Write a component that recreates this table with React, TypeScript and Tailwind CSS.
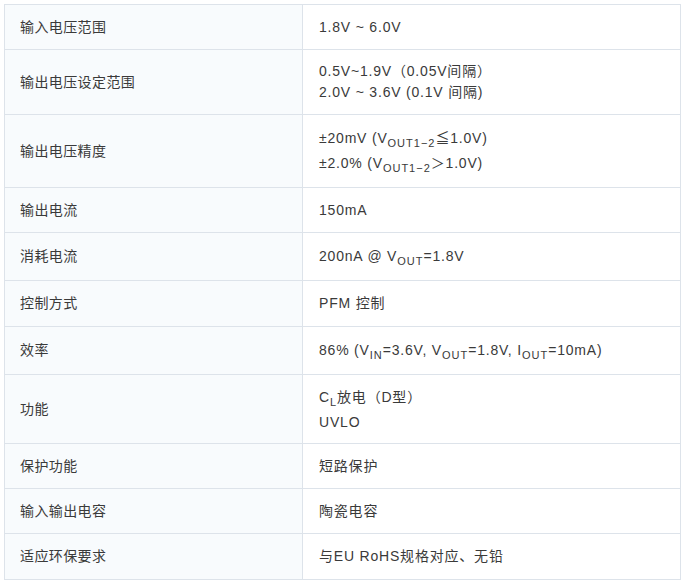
import React from "react";

type Row = {
  label: string;
  h: string;
  lines: React.ReactNode[];
  leading?: string;
};

const Sub = ({ children }: { children: React.ReactNode }) => (
  <span className="relative top-[4px] text-[11px] tracking-[1px]">{children}</span>
);

const ROWS: Row[] = [
  { label: "输入电压范围", h: "h-[45px]", lines: ["1.8V ~ 6.0V"] },
  {
    label: "输出电压设定范围",
    h: "h-[65px]",
    leading: "leading-[21px]",
    lines: ["0.5V~1.9V（0.05V间隔）", "2.0V ~ 3.6V (0.1V 间隔)"],
  },
  {
    label: "输出电压精度",
    h: "h-[73px]",
    leading: "leading-[24px]",
    lines: [
      <>±20mV (V<Sub>OUT1−2</Sub>≦1.0V)</>,
      <>±2.0% (V<Sub>OUT1−2</Sub>＞1.0V)</>,
    ],
  },
  { label: "输出电流", h: "h-[45px]", lines: ["150mA"] },
  {
    label: "消耗电流",
    h: "h-[48px]",
    lines: [<>200nA @ V<Sub>OUT</Sub>=1.8V</>],
  },
  { label: "控制方式", h: "h-[46px]", lines: ["PFM 控制"] },
  {
    label: "效率",
    h: "h-[48px]",
    lines: [
      <>86% (V<Sub>IN</Sub>=3.6V, V<Sub>OUT</Sub>=1.8V, I<Sub>OUT</Sub>=10mA)</>,
    ],
  },
  {
    label: "功能",
    h: "h-[69px]",
    leading: "leading-[24px]",
    lines: [<>C<Sub>L</Sub>放电（D型）</>, "UVLO"],
  },
  { label: "保护功能", h: "h-[45px]", lines: ["短路保护"] },
  { label: "输入输出电容", h: "h-[45px]", lines: ["陶瓷电容"] },
  { label: "适应环保要求", h: "h-[45px]", lines: ["与EU RoHS规格对应、无铅"] },
];

export default function App() {
  return (
    <div
      className="min-h-[583px] bg-white p-1 text-[14px] text-[#3a3a3a]"
      style={{ fontFamily: '"Liberation Sans", Arial, "Noto Sans CJK SC", sans-serif' }}
    >
      <div className="w-[677px] border border-[#dde3ea]">
        {ROWS.map((r, i) => (
          <div
            key={r.label}
            className={`grid grid-cols-[298px_1fr] ${r.h} ${i < ROWS.length - 1 ? "border-b border-[#dde3ea]" : ""}`}
          >
            <div className="flex items-center border-r border-[#dde3ea] bg-[#f8fbfd] pl-[15px] tracking-[0.4px]">
              {r.label}
            </div>
            <div
              className={`flex flex-col justify-center pl-[16px] tracking-[0.8px] ${r.leading ?? "leading-[21px]"}`}
            >
              {r.lines.map((l, j) => (
                <div key={j}>{l}</div>
              ))}
            </div>
          </div>
        ))}
      </div>
    </div>
  );
}
